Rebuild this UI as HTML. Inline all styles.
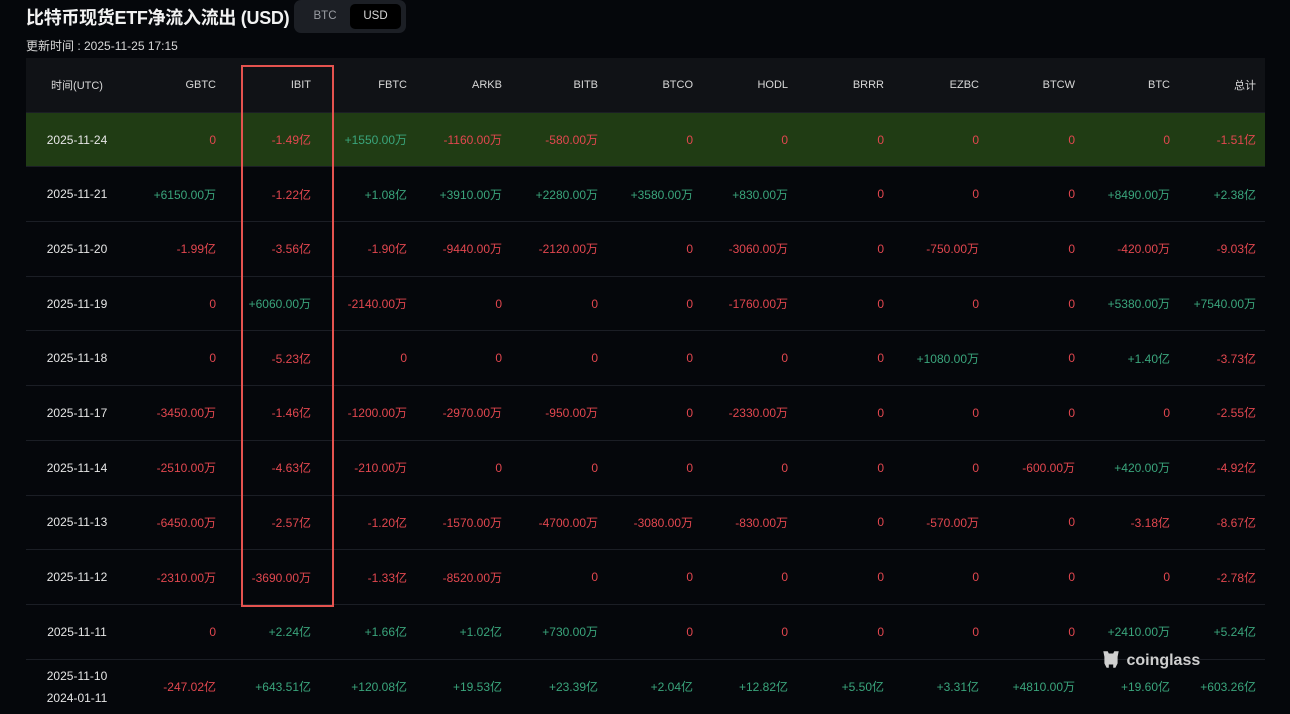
<!DOCTYPE html>
<html><head><meta charset="utf-8"><style>
*{margin:0;padding:0;box-sizing:border-box}
body{width:1290px;height:707px;background:#05070b;overflow:hidden;position:relative;font-family:"Liberation Sans","Noto Sans CJK SC",sans-serif;color:#ddd}
.title{position:absolute;left:26px;top:4px;font-size:18px;font-weight:bold;color:#f2f2f2;letter-spacing:-0.3px}
.tog{position:absolute;left:294px;top:0;width:112px;height:33px;background:#1c1f25;border-radius:7px}
.tog span{position:absolute;top:4px;height:25px;line-height:25px;font-size:11.5px;text-align:center;color:#9a9da3}
.tog .a{left:56px;width:51px;background:#000;border-radius:5px;color:#d8d8d8}
.upd{position:absolute;left:26px;top:37px;font-size:12px;color:#d8d8d8}
.tbl{position:absolute;left:26px;top:58px;width:1239px}
.r{display:flex;align-items:center;height:54.7px;border-bottom:1px solid #1b1e25;font-size:12px}
.r>div{text-align:right;flex:none}
.r>div:first-child{text-align:center;color:#e6e6e6}
.h{background:#101216;color:#d8d8d8;font-size:11px}
.h>div:first-child{color:#d8d8d8!important}
.g{background:#203c14}
.n{color:#e2474f}.p{color:#3aa57c}
.w0{width:102px}.w1{width:88px}.a95{width:95px}.a96{width:96px}.wl{width:86px}
.box{position:absolute;left:241px;top:65px;width:93px;height:542px;border:2.5px solid #e5534f}
.logo{position:absolute;left:1100px;top:649px;font-size:16px;font-weight:bold;color:#cfcfcf}
</style></head><body>
<div class="title">比特币现货ETF净流入流出 (USD)</div>
<div class="tog"><span style="left:6px;width:50px">BTC</span><span class="a">USD</span></div>
<div class="upd">更新时间 : 2025-11-25 17:15</div>
<div class="tbl">
<div class="r h"><div class="w0">时间(UTC)</div><div class="w1">GBTC</div><div class="a95">IBIT</div><div class="a96">FBTC</div><div class="a95">ARKB</div><div class="a96">BITB</div><div class="a95">BTCO</div><div class="a95">HODL</div><div class="a96">BRRR</div><div class="a95">EZBC</div><div class="a96">BTCW</div><div class="a95">BTC</div><div class="wl">总计</div></div>
<div class="r g"><div class="w0">2025-11-24</div><div class="w1 n">0</div><div class="a95 n">-1.49亿</div><div class="a96 p">+1550.00万</div><div class="a95 n">-1160.00万</div><div class="a96 n">-580.00万</div><div class="a95 n">0</div><div class="a95 n">0</div><div class="a96 n">0</div><div class="a95 n">0</div><div class="a96 n">0</div><div class="a95 n">0</div><div class="wl n">-1.51亿</div></div>
<div class="r"><div class="w0">2025-11-21</div><div class="w1 p">+6150.00万</div><div class="a95 n">-1.22亿</div><div class="a96 p">+1.08亿</div><div class="a95 p">+3910.00万</div><div class="a96 p">+2280.00万</div><div class="a95 p">+3580.00万</div><div class="a95 p">+830.00万</div><div class="a96 n">0</div><div class="a95 n">0</div><div class="a96 n">0</div><div class="a95 p">+8490.00万</div><div class="wl p">+2.38亿</div></div>
<div class="r"><div class="w0">2025-11-20</div><div class="w1 n">-1.99亿</div><div class="a95 n">-3.56亿</div><div class="a96 n">-1.90亿</div><div class="a95 n">-9440.00万</div><div class="a96 n">-2120.00万</div><div class="a95 n">0</div><div class="a95 n">-3060.00万</div><div class="a96 n">0</div><div class="a95 n">-750.00万</div><div class="a96 n">0</div><div class="a95 n">-420.00万</div><div class="wl n">-9.03亿</div></div>
<div class="r"><div class="w0">2025-11-19</div><div class="w1 n">0</div><div class="a95 p">+6060.00万</div><div class="a96 n">-2140.00万</div><div class="a95 n">0</div><div class="a96 n">0</div><div class="a95 n">0</div><div class="a95 n">-1760.00万</div><div class="a96 n">0</div><div class="a95 n">0</div><div class="a96 n">0</div><div class="a95 p">+5380.00万</div><div class="wl p">+7540.00万</div></div>
<div class="r"><div class="w0">2025-11-18</div><div class="w1 n">0</div><div class="a95 n">-5.23亿</div><div class="a96 n">0</div><div class="a95 n">0</div><div class="a96 n">0</div><div class="a95 n">0</div><div class="a95 n">0</div><div class="a96 n">0</div><div class="a95 p">+1080.00万</div><div class="a96 n">0</div><div class="a95 p">+1.40亿</div><div class="wl n">-3.73亿</div></div>
<div class="r"><div class="w0">2025-11-17</div><div class="w1 n">-3450.00万</div><div class="a95 n">-1.46亿</div><div class="a96 n">-1200.00万</div><div class="a95 n">-2970.00万</div><div class="a96 n">-950.00万</div><div class="a95 n">0</div><div class="a95 n">-2330.00万</div><div class="a96 n">0</div><div class="a95 n">0</div><div class="a96 n">0</div><div class="a95 n">0</div><div class="wl n">-2.55亿</div></div>
<div class="r"><div class="w0">2025-11-14</div><div class="w1 n">-2510.00万</div><div class="a95 n">-4.63亿</div><div class="a96 n">-210.00万</div><div class="a95 n">0</div><div class="a96 n">0</div><div class="a95 n">0</div><div class="a95 n">0</div><div class="a96 n">0</div><div class="a95 n">0</div><div class="a96 n">-600.00万</div><div class="a95 p">+420.00万</div><div class="wl n">-4.92亿</div></div>
<div class="r"><div class="w0">2025-11-13</div><div class="w1 n">-6450.00万</div><div class="a95 n">-2.57亿</div><div class="a96 n">-1.20亿</div><div class="a95 n">-1570.00万</div><div class="a96 n">-4700.00万</div><div class="a95 n">-3080.00万</div><div class="a95 n">-830.00万</div><div class="a96 n">0</div><div class="a95 n">-570.00万</div><div class="a96 n">0</div><div class="a95 n">-3.18亿</div><div class="wl n">-8.67亿</div></div>
<div class="r"><div class="w0">2025-11-12</div><div class="w1 n">-2310.00万</div><div class="a95 n">-3690.00万</div><div class="a96 n">-1.33亿</div><div class="a95 n">-8520.00万</div><div class="a96 n">0</div><div class="a95 n">0</div><div class="a95 n">0</div><div class="a96 n">0</div><div class="a95 n">0</div><div class="a96 n">0</div><div class="a95 n">0</div><div class="wl n">-2.78亿</div></div>
<div class="r"><div class="w0">2025-11-11</div><div class="w1 n">0</div><div class="a95 p">+2.24亿</div><div class="a96 p">+1.66亿</div><div class="a95 p">+1.02亿</div><div class="a96 p">+730.00万</div><div class="a95 n">0</div><div class="a95 n">0</div><div class="a96 n">0</div><div class="a95 n">0</div><div class="a96 n">0</div><div class="a95 p">+2410.00万</div><div class="wl p">+5.24亿</div></div>
<div class="r" style="border:none;height:54px"><div class="w0" style="line-height:22px">2025-11-10<br>2024-01-11</div><div class="w1 n">-247.02亿</div><div class="a95 p">+643.51亿</div><div class="a96 p">+120.08亿</div><div class="a95 p">+19.53亿</div><div class="a96 p">+23.39亿</div><div class="a95 p">+2.04亿</div><div class="a95 p">+12.82亿</div><div class="a96 p">+5.50亿</div><div class="a95 p">+3.31亿</div><div class="a96 p">+4810.00万</div><div class="a95 p">+19.60亿</div><div class="wl p">+603.26亿</div></div>
</div>
<div class="box"></div>
<div class="logo"><svg width="22" height="20" viewBox="0 0 20 18" style="vertical-align:-4px"><path d="M3 2h4l1 2h4l1-2h4l-1 5v6l-2 4h-2v-3h-4v3H6l-2-4V7z" fill="#d0d0d0"/></svg> coinglass</div>
</body></html>
